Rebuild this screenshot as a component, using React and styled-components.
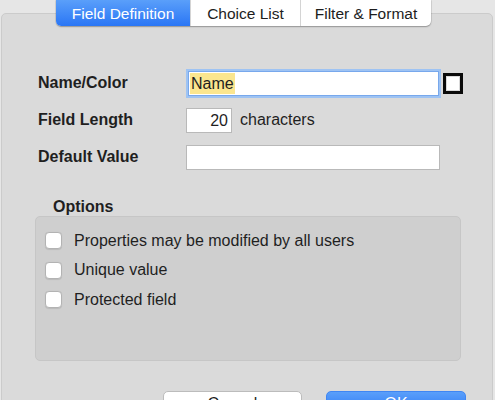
import React from "react";
import styled, { createGlobalStyle } from "styled-components";

const Global = createGlobalStyle`
  html, body { margin: 0; padding: 0; background: #e6e6e6; }
  body { font-family: "Liberation Sans", Arial, sans-serif; color: #1f1f1f; }
`;

const Window = styled.div`
  width: 495px;
  height: 400px;
  overflow: hidden;
  background: #e6e6e6;
  display: flex;
  flex-direction: column;
`;

const TabBar = styled.div`
  flex: none;
  display: flex;
  margin-left: 56px;
  width: 375px;
  height: 26px;
  margin-bottom: -13px;
  position: relative;
  z-index: 1;
  border-radius: 0 0 5px 5px;
  box-shadow: 0 1px 1.5px rgba(0, 0, 0, 0.28), 0 0 0 0.5px rgba(0, 0, 0, 0.12);
  background: #fff;
`;

const Tab = styled.div`
  flex: 0 0 ${(p) => p.$w}px;
  display: flex;
  align-items: center;
  justify-content: center;
  font-size: 15.5px;
  color: ${(p) => (p.$active ? "#fff" : "#1d1d1d")};
  background: ${(p) =>
    p.$active ? "linear-gradient(#5a9ffa, #2a76f5)" : "transparent"};
  border-left: ${(p) => (p.$first ? "none" : "1px solid #d4d4d4")};
  border-radius: ${(p) =>
    p.$first ? "0 0 0 5px" : p.$last ? "0 0 5px 0" : "0"};
  box-sizing: border-box;
  padding-top: 1px;
`;

const Panel = styled.div`
  margin: 0 2px 0 1px;
  height: 420px;
  flex: none;
  background: #dadada;
  border: 1px solid #cbcbcb;
  border-radius: 5px;
  box-sizing: border-box;
  display: flex;
  flex-direction: column;
`;

const Form = styled.div`
  display: grid;
  grid-template-columns: 148px auto;
  row-gap: 11px;
  margin: 56px 0 0 36px;
  align-items: center;
`;

const Label = styled.div`
  font-weight: bold;
  font-size: 16px;
  color: #1f1f1f;
`;

const FieldLine = styled.div`
  display: flex;
  align-items: center;
  gap: ${(p) => p.$gap || 0}px;
  height: 26px;
`;

const TextField = styled.div`
  width: ${(p) => p.$w}px;
  height: 25px;
  box-sizing: border-box;
  background: #fff;
  border: 1px solid ${(p) => (p.$focus ? "#78a8ec" : "#b9b9b9")};
  box-shadow: ${(p) => (p.$focus ? "0 0 0 2px #9ec3f3" : "none")};
  font-size: 16px;
  line-height: 23px;
  padding: 0 ${(p) => (p.$right ? 3 : 1)}px;
  text-align: ${(p) => (p.$right ? "right" : "left")};
  color: #1f1f1f;
  margin-left: ${(p) => (p.$focus ? 2 : 0)}px;
  white-space: nowrap;
  overflow: hidden;
`;

const Selected = styled.span`
  display: inline-block;
  background: #fbe68f;
  padding: 0 1px;
  height: 21px;
  line-height: 21px;
  margin-top: 1px;
  vertical-align: top;
`;

const Swatch = styled.div`
  width: 20px;
  height: 21px;
  box-sizing: border-box;
  border: 3px solid #0a0a0a;
  background: #fff;
  box-shadow: inset 0 0 0 1px #d9d9d9;
`;

const Suffix = styled.span`
  font-size: 16px;
  color: #1f1f1f;
`;

const OptionsTitle = styled.div`
  font-weight: bold;
  font-size: 16px;
  height: 18px;
  line-height: 18px;
  margin: 28px 0 0 51px;
`;

const OptionsBox = styled.div`
  width: 426px;
  height: 145px;
  box-sizing: border-box;
  margin-left: 33px;
  background: #cfcfcf;
  border: 1px solid #c6c6c6;
  border-radius: 5px;
  padding: 9px 0 0 9px;
  display: flex;
  flex-direction: column;
`;

const CheckRow = styled.label`
  display: flex;
  align-items: center;
  height: 29.5px;
  gap: 12px;
  font-size: 16px;
  color: #1f1f1f;
`;

const Box = styled.span`
  width: 17px;
  height: 17px;
  box-sizing: border-box;
  background: #fff;
  border: 1px solid #b3b3b3;
  border-radius: 4px;
  box-shadow: 0 0.5px 1px rgba(0, 0, 0, 0.1);
`;

const ButtonRow = styled.div`
  display: flex;
  gap: 24px;
  margin: 30px 0 0 161px;
`;

const Button = styled.div`
  width: ${(p) => p.$w}px;
  height: 24px;
  box-sizing: border-box;
  border-radius: 5px;
  font-size: 16px;
  display: flex;
  align-items: center;
  justify-content: center;
  color: ${(p) => (p.$primary ? "#fff" : "#1f1f1f")};
  background: ${(p) =>
    p.$primary ? "linear-gradient(#5a9ffa, #2a76f5)" : "#fff"};
  border: 1px solid ${(p) => (p.$primary ? "#3f86f3" : "#bcbcbc")};
  padding-top: 1px;
`;

const tabs = [
  { label: "Field Definition", w: 134, active: true },
  { label: "Choice List", w: 110 },
  { label: "Filter & Format", w: 131 },
];

const options = [
  "Properties may be modified by all users",
  "Unique value",
  "Protected field",
];

export default function App() {
  return (
    <>
      <Global />
      <Window>
        <TabBar>
          {tabs.map((t, i) => (
            <Tab
              key={t.label}
              $w={t.w}
              $active={t.active}
              $first={i === 0}
              $last={i === tabs.length - 1}
            >
              {t.label}
            </Tab>
          ))}
        </TabBar>
        <Panel>
          <Form>
            <Label>Name/Color</Label>
            <FieldLine $gap={4}>
              <TextField $w={251} $focus>
                <Selected>Name</Selected>
              </TextField>
              <Swatch />
            </FieldLine>
            <Label>Field Length</Label>
            <FieldLine $gap={8}>
              <TextField $w={46} $right>
                20
              </TextField>
              <Suffix>characters</Suffix>
            </FieldLine>
            <Label>Default Value</Label>
            <FieldLine>
              <TextField $w={254} />
            </FieldLine>
          </Form>
          <OptionsTitle>Options</OptionsTitle>
          <OptionsBox>
            {options.map((o) => (
              <CheckRow key={o}>
                <Box />
                {o}
              </CheckRow>
            ))}
          </OptionsBox>
          <ButtonRow>
            <Button $w={139}>Cancel</Button>
            <Button $w={140} $primary>
              OK
            </Button>
          </ButtonRow>
        </Panel>
      </Window>
    </>
  );
}
